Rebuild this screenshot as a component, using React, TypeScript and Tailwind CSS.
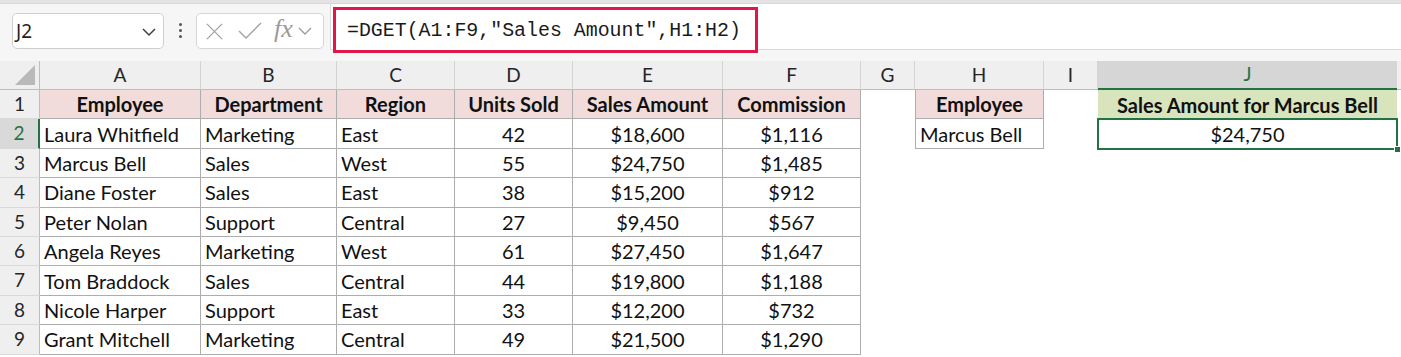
import React from "react";

type Align = "left" | "center";

const rows: string[][] = [
  ["Laura Whitfield", "Marketing", "East", "42", "$18,600", "$1,116"],
  ["Marcus Bell", "Sales", "West", "55", "$24,750", "$1,485"],
  ["Diane Foster", "Sales", "East", "38", "$15,200", "$912"],
  ["Peter Nolan", "Support", "Central", "27", "$9,450", "$567"],
  ["Angela Reyes", "Marketing", "West", "61", "$27,450", "$1,647"],
  ["Tom Braddock", "Sales", "Central", "44", "$19,800", "$1,188"],
  ["Nicole Harper", "Support", "East", "33", "$12,200", "$732"],
  ["Grant Mitchell", "Marketing", "Central", "49", "$21,500", "$1,290"],
];

const headers = ["Employee", "Department", "Region", "Units Sold", "Sales Amount", "Commission"];

// widths of columns A..J written out so tailwind picks them up
const colW = [
  "w-[161px]",
  "w-[136px]",
  "w-[118px]",
  "w-[118px]",
  "w-[150px]",
  "w-[138px]",
  "w-[54px]",
  "w-[129px]",
  "w-[54px]",
  "w-[299px]",
];
const letters = ["A", "B", "C", "D", "E", "F", "G", "H", "I", "J"];
const align: Align[] = ["left", "left", "left", "center", "center", "center"];

function RowHead({ n, active }: { n: number; active?: boolean }) {
  return (
    <div
      className={
        "w-[40px] shrink-0 flex items-center justify-center text-[19px] border-b border-[#d9d9d9] " +
        (active
          ? "bg-[#d9d9d9] text-[#217346] border-r-2 border-r-[#217346]"
          : "bg-[#efefef] text-[#262626] border-r border-r-[#bdbdbd]")
      }
    >
      {n}
    </div>
  );
}

function TableCell({ w, text, a, head }: { w: string; text: string; a: Align; head?: boolean }) {
  return (
    <div
      className={
        w +
        " shrink-0 flex items-center border-r border-b border-[#adadad] whitespace-nowrap overflow-hidden " +
        (head ? "bg-[#f2dcdb] font-bold justify-center" : a === "center" ? "justify-center" : "pl-[4px]")
      }
    >
      {text}
    </div>
  );
}

function Blank({ w }: { w: string }) {
  return <div className={w + " shrink-0"} />;
}

export default function App() {
  return (
    <div className="w-[1401px] h-[357px] overflow-hidden bg-white text-[#111] font-['Lato','Liberation_Sans',sans-serif]">
      {/* formula bar */}
      <div className="relative h-[61px] bg-[#f6f6f6]">
        <div className="h-[4px] bg-[#e3e3e3] border-b border-[#d8d8d8]" />
        <div className="flex h-[46px]">
          <div className="w-[330px] shrink-0 flex items-end pb-[1px] pl-[12px]">
            <div className="w-[152px] h-[36px] rounded-[5px] border border-[#cfcfcf] bg-white flex items-center pl-[3px] pr-[6px]">
              <span className="flex-1 text-[19px] text-[#1f1f1f] font-['Noto_Sans',sans-serif]">J2</span>
              <svg width="16" height="16" viewBox="0 0 16 16" className="mt-[2px]">
                <polyline points="2,5 8,11 14,5" fill="none" stroke="#404040" strokeWidth="1.5" />
              </svg>
            </div>
            <div className="w-[32px] h-[36px] flex flex-col items-center justify-center gap-[3px] pb-[2px]">
              <div className="w-[3px] h-[3px] rounded-full bg-[#555]" />
              <div className="w-[3px] h-[3px] rounded-full bg-[#555]" />
              <div className="w-[3px] h-[3px] rounded-full bg-[#555]" />
            </div>
            <div className="w-[128px] h-[36px] rounded-[5px] border border-[#d6d6d6] bg-white flex items-center pl-[8px]">
              <svg width="19" height="19" viewBox="0 0 20 20">
                <path d="M2 2 L18 18 M18 2 L2 18" stroke="#a3a3a3" strokeWidth="1.4" fill="none" />
              </svg>
              <svg width="24" height="20" viewBox="0 0 24 20" className="ml-[14px]">
                <polyline points="1,10 8,17 23,2" stroke="#a3a3a3" strokeWidth="1.4" fill="none" />
              </svg>
              <span className="ml-[12px] text-[26px] leading-none italic text-[#9a9a9a] font-['Liberation_Serif',serif] pb-[4px]">
                fx
              </span>
              <svg width="14" height="14" viewBox="0 0 14 14" className="ml-[5px]">
                <polyline points="1,4 7,10 13,4" fill="none" stroke="#9a9a9a" strokeWidth="1.3" />
              </svg>
            </div>
          </div>
          <div className="flex-1 bg-white border-l border-b border-[#dadada]" />
        </div>
        {/* highlight around the formula */}
        <div className="absolute left-[333px] top-[7px] w-[425px] h-[46px] border-[3px] border-[#e0184a] bg-white flex items-center pl-[11px] pt-[2px]">
          <span className="text-[19.9px] text-[#1a1a1a] font-['Liberation_Mono',monospace] whitespace-nowrap">
            =DGET(A1:F9,"Sales Amount",H1:H2)
          </span>
        </div>
      </div>

      {/* column headers */}
      <div className="flex h-[29px] text-[19px]">
        <div className="w-[40px] shrink-0 bg-[#efefef] border-r border-b border-[#bdbdbd] flex items-end justify-end pr-[4px] pb-[4px]">
          <svg width="20" height="20" viewBox="0 0 20 20">
            <polygon points="20,0 20,20 0,20" fill="#b9b9b9" />
          </svg>
        </div>
        {letters.map((l, i) =>
          l === "J" ? (
            <div
              key={l}
              className={colW[i] + " shrink-0 bg-[#d6d6d6] text-[#217346] border-b-2 border-[#217346] flex items-center justify-center"}
            >
              {l}
            </div>
          ) : (
            <div
              key={l}
              className={colW[i] + " shrink-0 bg-[#efefef] border-r border-r-[#d4d4d4] border-b border-b-[#bdbdbd] flex items-center justify-center text-[#262626]"}
            >
              {l}
            </div>
          )
        )}
        <div className="flex-1 bg-[#efefef] border-b border-[#bdbdbd]" />
      </div>

      {/* row 1 */}
      <div className="flex h-[29.4px] text-[20px]">
        <RowHead n={1} />
        {headers.map((h, i) => (
          <TableCell key={h} w={colW[i]} text={h} a="center" head />
        ))}
        <Blank w={colW[6]} />
        <div className="w-[129px] shrink-0 flex items-center justify-center bg-[#f2dcdb] font-bold border border-t-0 border-[#adadad]">
          Employee
        </div>
        <Blank w={colW[8]} />
        <div className="w-[299px] shrink-0 flex items-center justify-center bg-[#d8e4bc] font-bold whitespace-nowrap">
          Sales Amount for Marcus Bell
        </div>
      </div>

      {/* rows 2..9 */}
      {rows.map((r, ri) => (
        <div key={ri} className="flex h-[29.4px] text-[20px]">
          <RowHead n={ri + 2} active={ri === 0} />
          {r.map((v, ci) => (
            <TableCell key={ci} w={colW[ci]} text={v} a={align[ci]} />
          ))}
          <Blank w={colW[6]} />
          {ri === 0 ? (
            <div className="w-[129px] shrink-0 flex items-center pl-[4px] border border-t-0 border-[#adadad]">
              Marcus Bell
            </div>
          ) : (
            <Blank w={colW[7]} />
          )}
          <Blank w={colW[8]} />
          {ri === 0 ? (
            <div className="relative w-[299px] shrink-0 flex items-center justify-center">
              $24,750
              <div className="absolute -left-[1px] -top-[1px] -right-[1px] -bottom-[1px] border-2 border-[#217346]" />
              <div className="absolute -right-[4px] -bottom-[4px] w-[7px] h-[7px] bg-[#217346] border border-white" />
            </div>
          ) : (
            <Blank w={colW[9]} />
          )}
        </div>
      ))}
    </div>
  );
}
